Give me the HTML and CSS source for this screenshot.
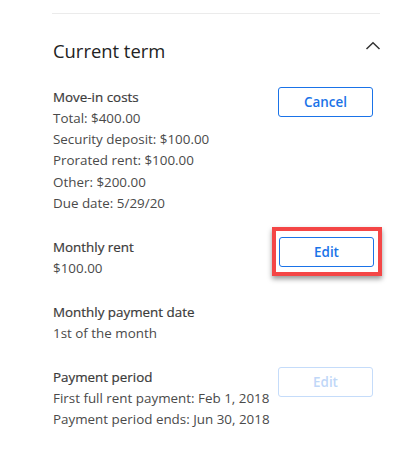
FILE: index.html
```html
<!DOCTYPE html>
<html>
<head>
<meta charset="utf-8">
<link rel="stylesheet" href="styles.css">
</head>
<body>
<div class="panel">
  <div class="divider"></div>
  <div class="header">
    <h2 class="title">Current term</h2>
    <svg class="chevron" width="16" height="10" viewBox="0 0 16 10"><path d="M1.5 8 L8 1.8 L14.5 8" fill="none" stroke="#333" stroke-width="1.5"/></svg>
  </div>
  <div class="section">
    <div class="info">
      <div class="label">Move-in costs</div>
      <div class="line">Total: $400.00</div>
      <div class="line">Security deposit: $100.00</div>
      <div class="line">Prorated rent: $100.00</div>
      <div class="line">Other: $200.00</div>
      <div class="line">Due date: 5/29/20</div>
    </div>
    <button class="btn">Cancel</button>
  </div>
  <div class="section">
    <div class="info">
      <div class="label">Monthly rent</div>
      <div class="line">$100.00</div>
    </div>
    <div class="highlight"><button class="btn">Edit</button></div>
  </div>
  <div class="section">
    <div class="info">
      <div class="label">Monthly payment date</div>
      <div class="line">1st of the month</div>
    </div>
  </div>
  <div class="section">
    <div class="info">
      <div class="label">Payment period</div>
      <div class="line">First full rent payment: Feb 1, 2018</div>
      <div class="line">Payment period ends: Jun 30, 2018</div>
    </div>
    <button class="btn disabled" disabled>Edit</button>
  </div>
</div>
</body>
</html>
```
FILE: styles.css
```css
html, body {
  margin: 0;
  padding: 0;
  background: #fff;
}
body {
  font-family: "Open Sans", "Noto Sans", sans-serif;
  color: #444;
}
.panel {
  padding: 13px 28px 0 52px;
}
.divider {
  height: 1px;
  background: #ebebeb;
}
.header {
  display: flex;
  justify-content: space-between;
  align-items: center;
  margin-top: 24px;
  height: 26px;
}
.title {
  margin: 0;
  font-size: 18.4px;
  font-weight: 400;
  color: #222;
  line-height: 26px;
  padding-left: 1px;
}
.chevron {
  margin-top: -10px;
  margin-right: -1px;
}
.section {
  display: flex;
  justify-content: space-between;
  align-items: flex-start;
  margin-top: 22.5px;
}
.section:first-of-type {
  margin-top: 24px;
}
.info {
  padding-left: 1px;
  font-size: 13.4px;
  line-height: 21.25px;
}
.label {
  color: #3a3a3a;
  font-weight: 400;
  -webkit-text-stroke: 0.2px #3a3a3a;
}
.line {
  color: #4a4a4a;
}
.btn {
  width: 95px;
  height: 30px;
  margin-right: 7px;
  box-sizing: border-box;
  border: 1px solid #1a73e8;
  border-radius: 3px;
  background: #fff;
  color: #1a73e8;
  font-family: "Open Sans", "Noto Sans", sans-serif;
  font-size: 13.4px;
  font-weight: 600;
  padding: 0;
}
.btn.disabled {
  border-color: #c5dcfa;
  color: #c0d7f8;
}
.highlight {
  margin-top: -10px;
  margin-right: -2px;
  padding: 6px 4px 5px 3px;
  border: 4px solid #f44646;
  box-shadow: 0 3px 5px rgba(0,0,0,0.4);
}
.highlight .btn {
  margin-right: 0;
  display: block;
}
```
